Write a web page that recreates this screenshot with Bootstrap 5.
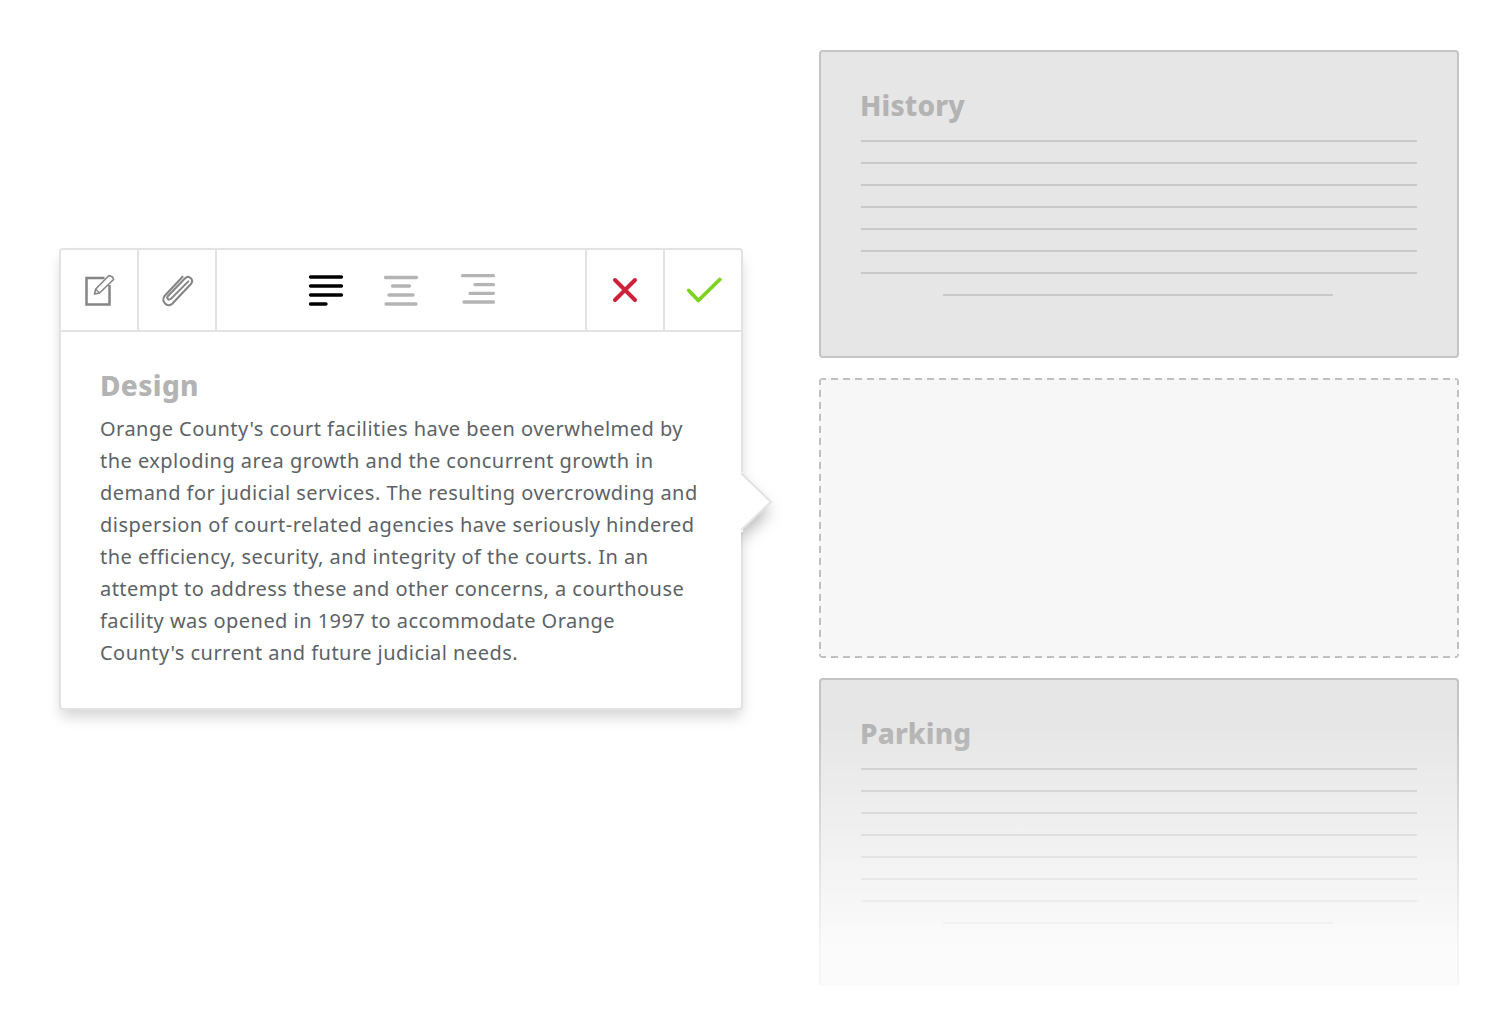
<!DOCTYPE html>
<html lang="en">
<head>
<meta charset="utf-8">
<title>Editor</title>
<link rel="stylesheet" href="https://cdn.jsdelivr.net/npm/bootstrap@5.3.0/dist/css/bootstrap.min.css">
<style>
body{background:#fff;font-family:"Noto Sans","Open Sans",sans-serif;height:1036px;overflow:hidden}
.stage{padding:50px 51px 0 59px;gap:76px}
.pop{position:relative;width:684px;height:462px;margin-top:198px;background:#fff;border:2px solid #e2e2e2;border-radius:4px;box-shadow:0 9px 14px -2px rgba(0,0,0,.17)}
.pop-tools{height:82px;border-bottom:2px solid #e2e2e2}
.tool{height:100%;display:flex;align-items:center;justify-content:center;border-right:2px solid #e2e2e2;flex:none}
.tool-a{width:78px}.tool-b{width:78px}.tool-c{flex:1 1 auto;gap:43px}.tool-d{width:78px}.tool-e{width:76px;border-right:0}
.tool svg{overflow:visible}
.pop-body{padding:35px 38px 0 39px}
.pop-title{font-size:28px;font-weight:800;letter-spacing:.35px;line-height:36px;color:#b3b3b3;margin:0 0 10px}
.pop-text{font-size:20px;letter-spacing:.46px;line-height:32px;color:#5c6266;margin:0}
.pop-tip{position:absolute;left:680px;top:200px}
.side{width:640px;gap:20px}
.sheet{position:relative;height:308px;background:#e6e6e6;border:2px solid #c4c4c4;border-radius:4px;padding:35px 40px 0}
.sheet-title{font-size:28px;font-weight:800;letter-spacing:.15px;line-height:36px;color:#b3b3b3;margin:0 0 17px -1px}
.rule{height:2px;background:#c9c9c9;margin-bottom:20px}
.rule-short{width:390px;margin-left:82px}
.drop{height:280px;background-color:#f7f7f7;border-radius:4px;
  background-image:repeating-linear-gradient(to right,#c0c0c0 0 7px,transparent 7px 12px),repeating-linear-gradient(to right,#c0c0c0 0 7px,transparent 7px 12px),repeating-linear-gradient(to bottom,#c0c0c0 0 7px,transparent 7px 12px),repeating-linear-gradient(to bottom,#c0c0c0 0 7px,transparent 7px 12px);
  background-size:100% 2px,100% 2px,2px 100%,2px 100%;background-position:0 0,0 100%,0 0,100% 0;background-repeat:no-repeat}
.fade-sheet{border-bottom:0}
.fade-sheet::after{content:"";position:absolute;inset:-2px -2px 0;background:linear-gradient(to bottom,rgba(255,255,255,0) 15%,rgba(255,255,255,.84) 88%)}
</style>
</head>
<body>
<div class="stage d-flex align-items-start">
  <section class="pop">
    <div class="pop-tools d-flex">
      <div class="tool tool-a">
        <svg width="32" height="32" viewBox="-1.500 0 32 32" fill="none"><path d="M20 4H2v26.500h23V11" stroke="#858585" stroke-width="2.500"/><path d="M10 20l1.200-5L24.500 1.500l3.600 1.500 1 2.500L15 19z" stroke="#858585" stroke-width="1.600" stroke-linejoin="round"/><path d="M11 15l4 4" stroke="#858585" stroke-width="1.200"/></svg>
      </div>
      <div class="tool tool-b">
        <svg width="32" height="34" viewBox="-1 0 32 34" fill="none"><path transform="translate(16 17) scale(1.15) translate(-16 -17)" d="M25 9.500L10 24.500c-2 2-4.500-.5-2.500-2.500L22 7c3.500-3.500 8.500 1 5 5L11 29c-4 4-10.500-2.500-6.500-7L20 5.500" stroke="#858585" stroke-width="1.800" stroke-linecap="round" stroke-linejoin="round"/></svg>
      </div>
      <div class="tool tool-c">
        <svg width="34" height="32" viewBox="-2 0 34 32" fill="none" stroke="#000" stroke-width="3.300" stroke-linecap="round"><path d="M1.500 3h31M1.500 12h31M1.500 21h31M1.500 30h15.500"/></svg>
        <svg width="34" height="32" viewBox="0 0 34 32" fill="none" stroke="#b4b4b4" stroke-width="3.300" stroke-linecap="round"><path d="M1.500 3.500h31M8.500 12h17M5 21h24M2 30h30"/></svg>
        <svg width="34" height="32" viewBox="0 0 34 32" fill="none" stroke="#b4b4b4" stroke-width="3.300" stroke-linecap="round"><path d="M1.500 1.700h31M14 10.700h18.500M9 19.300h23.500M3 28h29.500"/></svg>
      </div>
      <div class="tool tool-d">
        <svg width="26" height="26" viewBox="0 0 26 26" fill="none" stroke="#d0213a" stroke-width="4" stroke-linecap="round"><path d="M3 3l20 20M23 3L3 23"/></svg>
      </div>
      <div class="tool tool-e">
        <svg width="36" height="26" viewBox="-.800 0 36 26" fill="none" stroke="#7ed321" stroke-width="3.800" stroke-linecap="round" stroke-linejoin="round"><path d="M3 13.500l9.500 10L34 2.500"/></svg>
      </div>
    </div>
    <div class="pop-body">
      <h2 class="pop-title">Design</h2>
      <p class="pop-text">Orange County's court facilities have been overwhelmed by the exploding area growth and the concurrent growth in demand for judicial services. The resulting overcrowding and dispersion of court-related agencies have seriously hindered the efficiency, security, and integrity of the courts. In an attempt to address these and other concerns, a courthouse facility was opened in 1997 to accommodate Orange County's current and future judicial needs.</p>
    </div>
    <svg class="pop-tip" width="70" height="110" viewBox="0 0 70 110" fill="none">
      <defs><filter id="tipshadow" x="-100%" y="-100%" width="300%" height="300%"><feDropShadow dx="-2" dy="9" stdDeviation="8" flood-color="#000" flood-opacity=".3"/></filter></defs>
      <path d="M0 23L30 52 0 81z" fill="#fff" filter="url(#tipshadow)"/>
      <path d="M0 22h2v60H0z" fill="#fff"/>
      <path d="M0 23L30 52 0 80" fill="#fff" stroke="#e2e2e2" stroke-width="2"/>
    </svg>
  </section>
  <aside class="side d-flex flex-column">
    <article class="sheet">
      <h2 class="sheet-title">History</h2>
      <div class="rule"></div><div class="rule"></div><div class="rule"></div><div class="rule"></div><div class="rule"></div><div class="rule"></div><div class="rule"></div>
      <div class="rule rule-short"></div>
    </article>
    <div class="drop"></div>
    <article class="sheet fade-sheet">
      <h2 class="sheet-title">Parking</h2>
      <div class="rule"></div><div class="rule"></div><div class="rule"></div><div class="rule"></div><div class="rule"></div><div class="rule"></div><div class="rule"></div>
      <div class="rule rule-short"></div>
    </article>
  </aside>
</div>
<script src="https://cdn.jsdelivr.net/npm/bootstrap@5.3.0/dist/js/bootstrap.bundle.min.js"></script>
</body>
</html>
